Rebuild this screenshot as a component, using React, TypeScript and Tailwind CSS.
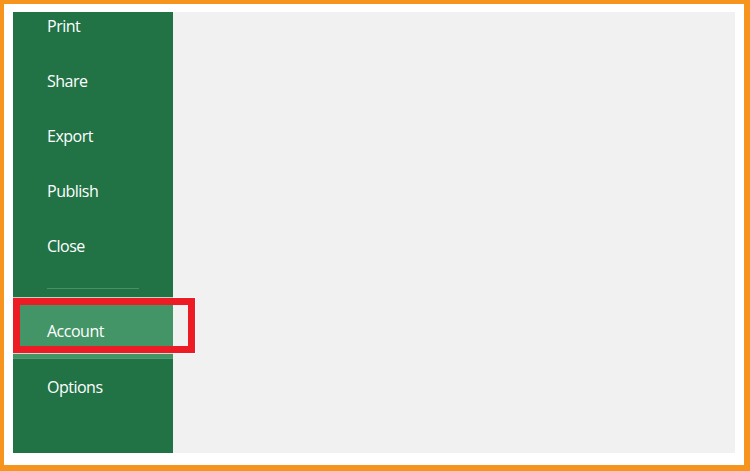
const items = ["Print", "Share", "Export", "Publish", "Close"];

function MenuItem({ label, active = false }: { label: string; active?: boolean }) {
  return (
    <div
      className={`flex h-[55px] items-center pl-[34px] text-[16px] tracking-[-0.5px] text-white ${
        active ? "bg-[#439467]" : ""
      }`}
    >
      <span className="mt-[1px]">{label}</span>
    </div>
  );
}

export default function App() {
  return (
    <div
      className="h-[471px] w-[750px] bg-[#f7941d] pb-[6px] pl-[4px] pr-[6px] pt-[4px]"
      style={{ fontFamily: '"Open Sans", "Noto Sans", sans-serif' }}
    >
      <div className="flex h-full w-full bg-white pb-[12px] pl-[9px] pr-[9px] pt-[8px]">
        <aside className="relative z-10 w-[160px] bg-[#217346]">
          <div className="h-full overflow-hidden">
            <div className="-mt-[14px] flex flex-col">
              {items.map((label) => (
                <MenuItem key={label} label={label} />
              ))}
              <div className="mx-[34px] mb-[14px] mt-[15px] h-px bg-[#4b8e68]" />
              <MenuItem label="Account" active />
              <div className="h-px bg-[#4f9a70]" />
              <MenuItem label="Options" />
            </div>
          </div>
          {/* callout around the Account entry */}
          <div className="pointer-events-none absolute left-0 top-[286px] h-[55px] w-[182px] border-[7px] border-[#ed1c24] outline outline-1 outline-white/70" />
        </aside>
        <main className="flex-1 bg-[#f1f1f1]" />
      </div>
    </div>
  );
}
